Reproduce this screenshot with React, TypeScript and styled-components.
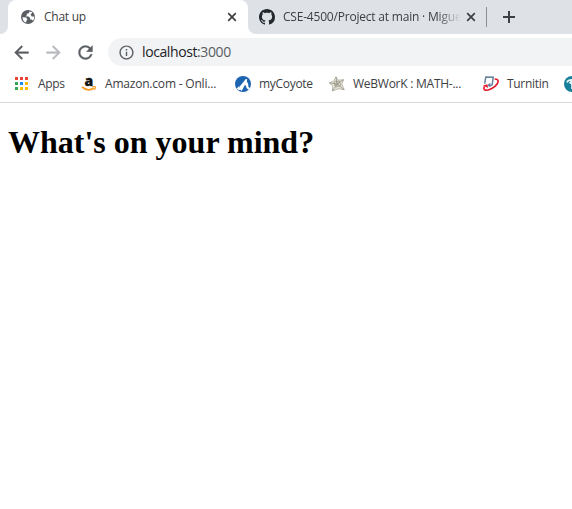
import React from "react";
import styled, { createGlobalStyle } from "styled-components";
import { MdArrowBack, MdArrowForward, MdOutlineInfo, MdRefresh } from "react-icons/md";

const GlobalStyle = createGlobalStyle`
  * { box-sizing: border-box; }
  html, body { margin: 0; background: #fff; overflow: hidden; }
  svg { display: block; flex: none; overflow: visible; }
`;

const Browser = styled.div`
  width: 100%;
  height: 100vh;
  overflow: hidden;
  font: 12px/16px "Open Sans", "Noto Sans", sans-serif;
  color: #3c4043;
`;

const TabStrip = styled.div`
  display: flex;
  height: 34px;
  background: #fff;
`;

const StripEdge = styled.div`
  width: 8px;
  background: #dee1e6;
  border-bottom-right-radius: 8px;
`;

const ActiveCorner = styled.div`
  display: flex;
  background: linear-gradient(#dee1e6 12px, #fff 12px);
`;

const ActiveTab = styled.div`
  display: flex;
  align-items: center;
  width: 240px;
  padding: 0 11px 0 12px;
  border-radius: 8px 8px 0 0;
  background: #fff;
`;

const StripRest = styled.div`
  display: flex;
  align-items: center;
  flex: 1;
  padding-left: 11px;
  background: #dee1e6;
  border-bottom-left-radius: 8px;
`;

const Label = styled.span<{ $width?: number; $gap?: number; $track?: number }>`
  flex: none;
  width: ${(p) => (p.$width ? `${p.$width}px` : "auto")};
  margin-left: ${(p) => p.$gap ?? 0}px;
  letter-spacing: ${(p) => p.$track ?? 0}px;
  white-space: nowrap;
`;

const FadedLabel = styled(Label)`
  margin-right: 5px;
  overflow: hidden;
  mask-image: linear-gradient(to right, #000 154px, transparent 178px);
`;

const Divider = styled.div`
  width: 1px;
  height: 20px;
  margin: 0 16px 0 10px;
  background: #8b8e93;
`;

const Toolbar = styled.div`
  display: flex;
  align-items: center;
  height: 36px;
  padding-left: 11px;
  gap: 11px;
  color: #5a5e63;

  > svg path:not([fill="none"]) {
    stroke: currentColor;
    stroke-width: 0.4px;
  }
`;

const AddressBar = styled.div`
  display: flex;
  align-items: center;
  flex: 1;
  height: 28px;
  margin-left: 1px;
  padding-left: 10px;
  border-radius: 14px 0 0 14px;
  background: #f1f3f4;
  font-size: 14px;
  line-height: 20px;
`;

const Host = styled.span`
  color: #202124;
`;

const BookmarksBar = styled.div`
  display: flex;
  align-items: center;
  height: 33px;
  padding: 0 0 5px 14px;
  border-bottom: 1px solid #d8dade;
  overflow: hidden;
`;

const Bookmark = styled.div<{ $span: number }>`
  display: flex;
  align-items: center;
  flex: none;
  width: ${(p) => p.$span}px;
`;

const Page = styled.main`
  padding: 0 8px;
`;

const Heading = styled.h1`
  margin: 21px 0 0;
  font: bold 32px/37px "Liberation Serif", "Times New Roman", serif;
  color: #000;
  white-space: nowrap;
`;

const Close = () => (
  <svg width="10" height="10" viewBox="0 0 10 10" stroke="#3c4043" strokeWidth="1.7">
    <path d="M1.2 1.2l7.6 7.6M8.8 1.2L1.2 8.8" />
  </svg>
);

const Plus = () => (
  <svg width="12" height="12" viewBox="0 0 12 12" stroke="#3c4043" strokeWidth="2">
    <path d="M6 0v12M0 6h12" />
  </svg>
);

const Globe = () => (
  <svg width="16" height="16" viewBox="0 0 16 16">
    <circle cx="8" cy="8" r="7" fill="#5a5e63" />
    <path d="M9.6 2.6L8.7 4.2 6.8 4.8v1.6l-1.5.9 3.2.1 1.6 1.6v1.6h1.6l1.3 1.1c1-1.3 1.4-2.8 1.2-4.3l-2.5.1-1.1-1.9 1.3-1.5.5-.9zM2.5 8.2l3.7.4 1.2 1.9-1.1 1.2v1.9C3.8 12.9 2.4 10.8 2.5 8.2z" fill="#fff" />
  </svg>
);

const Octocat = () => (
  <svg width="16" height="16" viewBox="0 0 16 16" fill="#24292e">
    <path d="M8 0C3.58 0 0 3.58 0 8c0 3.54 2.29 6.53 5.47 7.59.4.07.55-.17.55-.38 0-.19-.01-.82-.01-1.49-2.01.37-2.53-.49-2.69-.94-.09-.23-.48-.94-.82-1.13-.28-.15-.68-.52-.01-.53.63-.01 1.08.58 1.23.82.72 1.21 1.87.87 2.33.66.07-.52.28-.87.51-1.07-1.78-.2-3.64-.89-3.64-3.95 0-.87.31-1.59.82-2.15-.08-.2-.36-1.02.08-2.12 0 0 .67-.21 2.2.82.64-.18 1.32-.27 2-.27s1.36.09 2 .27c1.53-1.04 2.2-.82 2.2-.82.44 1.1.16 1.92.08 2.12.51.56.82 1.27.82 2.15 0 3.07-1.87 3.75-3.65 3.95.29.25.54.73.54 1.48 0 1.07-.01 1.93-.01 2.2 0 .21.15.46.55.38A8.01 8.01 0 0 0 16 8c0-4.42-3.58-8-8-8z" />
  </svg>
);

const dotColors = ["#ea4335", "#ea4335", "#ea4335", "#34a853", "#1a8cf0", "#fbbc04", "#34a853", "#fbbc04", "#fbbc04"];

const AppsGrid = () => (
  <svg width="16" height="16" viewBox="0 0 16 16" shapeRendering="crispEdges">
    {dotColors.map((color, i) => (
      <rect key={i} x={1 + (i % 3) * 5} y={1 + Math.floor(i / 3) * 5} width="3" height="3" fill={color} />
    ))}
  </svg>
);

const Amazon = () => (
  <svg width="16" height="16" viewBox="0 0 16 16">
    <text x="3.6" y="9.6" fontFamily="Open Sans, sans-serif" fontWeight="800" fontSize="14" fill="#111" stroke="#111" strokeWidth=".3">a</text>
    <path d="M1 10.9c3.6 3.4 8.3 3.5 12 1.2" fill="none" stroke="#f79a1c" strokeWidth="1.8" />
    <path d="M11.3 10.8c1.6-.5 3.3-.3 3.2.2.1 1-.5 2.3-1.3 3" fill="none" stroke="#f79a1c" strokeWidth="1.1" />
  </svg>
);

const Coyote = () => (
  <svg width="16" height="16" viewBox="0 0 16 16">
    <circle cx="8" cy="8" r="8" fill="#1c63b0" />
    <path d="M3.4 14.3c.6-2.5 1.5-4.6 3.2-6L10.8 3l1.3.3-.2 2.2 1.2 2.2.4 3.2 1.3 1.1-1.2 1.8-1.9-1.6-1.2-3.3-1.2.9-1 2.3-1.7 2.8-1.1-1.1z" fill="#fff" />
    <path d="M1.8 12.6l2.7-2.8-.9 4.4z" fill="#fff" />
  </svg>
);

const Web = () => (
  <svg width="16" height="16" viewBox="0 0 16 16" fill="none">
    <path d="M7 .8l1.8 3.4 5.8-.5-1.8 4.2 2.4 5.9-5.6-1.1L3.4 15l.4-4.7L.3 6.8l4.3-1.6z" fill="#e6e3d4" stroke="#a3a192" strokeWidth=".7" />
    <path d="M8 8L7 .8M8 8l6.6-4.3M8 8l7.2 5.8M8 8l-4.6 7M8 8L.3 6.8M6.2 5.1l4.5.5 1 4.1-4.9 1.2-2-3.6zM7.3 6.6l2 .4v1.7l-2.2.6-.9-1.6z" stroke="#85857a" strokeWidth=".6" />
  </svg>
);

const TurnitinMark = () => (
  <svg width="16" height="16" viewBox="0 0 16 16" fill="none">
    <path d="M1.7 7.6L2.8 1l7.4.2-1 7.6-2.6 1.4-1.7-1.6M6.7 10.1V7.2" stroke="#668199" strokeWidth="1.5" />
    <path d="M11.6 3c3.8-.1 4.4 2.2 2.5 4.9-2.5 3.6-8 6.8-11.3 6.3-1.9-.3-2.5-1.7-1.3-3.8" stroke="#e4172c" strokeWidth="1.7" />
    <path d="M0 9.6l4.3-1.3.9 3.7z" fill="#e4172c" />
  </svg>
);

const Teal = () => (
  <svg width="16" height="16" viewBox="0 0 16 16">
    <circle cx="8" cy="8" r="8" fill="#177f99" />
    <path d="M3 6.5C4 3 12 3 13 6.5M5.5 7.3L8 5l2.5 2.3M8 5.5V13" fill="none" stroke="#e7f6f8" strokeWidth="1.7" />
  </svg>
);

const bookmarks = [
  { icon: <AppsGrid />, label: "Apps", gap: 8, track: -0.3, span: 67 },
  { icon: <Amazon />, label: "Amazon.com - Onli...", gap: 8, track: -0.2, span: 154 },
  { icon: <Coyote />, label: "myCoyote", gap: 8, track: -0.3, span: 94 },
  { icon: <Web />, label: "WeBWorK : MATH-...", gap: 8, track: -0.25, span: 154 },
  { icon: <TurnitinMark />, label: "Turnitin", gap: 8, track: -0.3, span: 81 },
  { icon: <Teal />, label: "", gap: 0, track: 0, span: 16 },
];

export default function App() {
  return (
    <Browser>
      <GlobalStyle />
      <TabStrip>
        <StripEdge />
        <ActiveCorner>
          <ActiveTab>
            <Globe />
            <Label $gap={8} $width={183} $track={-0.25}>Chat up</Label>
            <Close />
          </ActiveTab>
        </ActiveCorner>
        <StripRest>
          <Octocat />
          <FadedLabel $gap={8} $width={178} $track={-0.2}>CSE-4500/Project at main · Migue</FadedLabel>
          <Close />
          <Divider />
          <Plus />
        </StripRest>
      </TabStrip>
      <Toolbar>
        <MdArrowBack size={21} />
        <MdArrowForward size={21} color="#b8babd" />
        <MdRefresh size={21} />
        <AddressBar>
          <MdOutlineInfo size={17} />
          <Label $gap={7} $track={-0.4}><Host>localhost</Host>:3000</Label>
        </AddressBar>
      </Toolbar>
      <BookmarksBar>
        {bookmarks.map((b, i) => (
          <Bookmark key={i} $span={b.span}>
            {b.icon}
            {b.label && <Label $gap={b.gap} $track={b.track}>{b.label}</Label>}
          </Bookmark>
        ))}
      </BookmarksBar>
      <Page>
        <Heading>What's on your mind?</Heading>
      </Page>
    </Browser>
  );
}
